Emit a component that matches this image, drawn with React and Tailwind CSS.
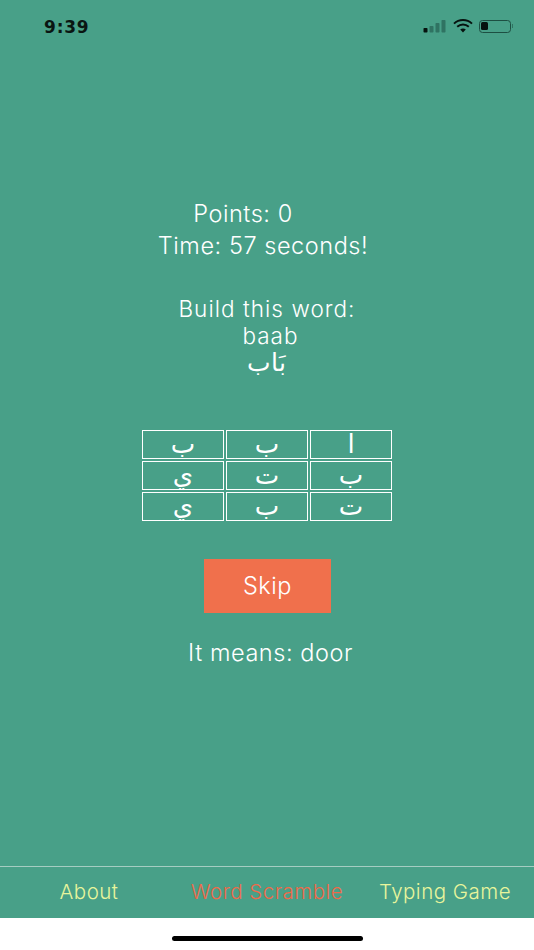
const F = "font-['Inter','Liberation_Sans','Noto_Sans',sans-serif]";
const cells = ["ب", "ب", "ا", "ي", "ت", "ب", "ي", "ب", "ت"];

function Signal() {
  return (
    <svg width="24" height="14" viewBox="0 0 24 14" className="block">
      <rect x="0.5" y="9" width="4" height="4.5" rx="0.8" fill="#06120e" />
      <rect x="6.5" y="7" width="4" height="6.5" rx="0.8" fill="#2f7362" />
      <rect x="12.5" y="4" width="4" height="9.5" rx="0.8" fill="#2f7362" />
      <rect x="18.5" y="1" width="4" height="12.5" rx="0.8" fill="#2f7362" />
    </svg>
  );
}

function Wifi() {
  return (
    <svg width="20" height="14" viewBox="0 0 20 14" className="block">
      <path d="M1 4.6C6 -0.2 14 -0.2 19 4.6" fill="none" stroke="#06120e" strokeWidth="2" />
      <path d="M4.2 7.8C7.5 4.8 12.5 4.8 15.8 7.8" fill="none" stroke="#06120e" strokeWidth="2" />
      <path d="M7.2 10.6L10 13.6L12.8 10.6C11.2 9.2 8.8 9.2 7.2 10.6Z" fill="#06120e" />
    </svg>
  );
}

function Battery() {
  return (
    <div className="flex items-center">
      <div className="w-[32px] h-[13px] rounded-[3.5px] border border-[#1d4f42] p-[1.5px] flex">
        <div className="w-[7px] rounded-[1.5px] bg-[#06120e]" />
      </div>
      <div className="w-[1.5px] h-[4px] bg-[#2f7362] ml-[1px]" />
    </div>
  );
}

export default function App() {
  return (
    <div className={`${F} w-[534px] h-[950px] bg-white flex flex-col overflow-hidden`}>
      <div className="h-[866px] bg-[#48a088] flex flex-col">
        <div className="h-[52px] flex items-start justify-between pt-[17px] pl-[44px] pr-[22px]">
          <span className="font-['DejaVu_Sans',sans-serif] font-bold text-[17px] leading-[20px] tracking-[0.8px] text-[#0a1512]">9:39</span>
          <div className="flex items-center gap-[6px] pt-[2px] mr-[-1px]">
            <Signal />
            <Wifi />
            <Battery />
          </div>
        </div>

        <div className="flex flex-col items-center text-white font-light text-[23.5px] tracking-[0.55px] leading-[32px] pt-[146px]">
          <div className="mr-[48px]">Points: 0</div>
          <div className="mr-[8px]">Time: 57 seconds!</div>
          <div className="flex flex-col items-center mt-[33px] text-[22.5px] tracking-[1.05px] leading-[27px]">
            <div>Build this word:</div>
            <div className="ml-[7px]">baab</div>
            <div className="font-['DejaVu_Sans',sans-serif] text-[25px] tracking-normal" dir="rtl">بَاب</div>
          </div>
        </div>

        <div className="grid grid-cols-[82px_82px_82px] grid-rows-[29px_29px_29px] gap-[2px] justify-center mt-[54px] text-white">
          {cells.map((c, i) => (
            <div key={i} className="border border-white flex items-center justify-center text-[26px] leading-[29px] font-['DejaVu_Sans',sans-serif] overflow-hidden">
              {c}
            </div>
          ))}
        </div>

        <button className="self-center mt-[38px] w-[127px] h-[54px] bg-[#f0704c] text-white font-light text-[23.5px] tracking-[0.55px] flex items-center justify-center mr-[-1px]">
          Skip
        </button>

        <div className="self-center mt-[24px] ml-[7px] text-white font-light text-[23.5px] tracking-[0.55px] leading-[32px]">It means: door</div>
      </div>

      <nav className="h-[52px] bg-[#48a088] border-t border-[#a6cdc2] grid grid-cols-3 items-center text-[20.5px] tracking-[0.5px] font-light leading-[24px] text-center pb-[2px]">
        <span className="text-[#e8f59c]">About</span>
        <span className="text-[#ee6a4a]">Word Scramble</span>
        <span className="text-[#e8f59c]">Typing Game</span>
      </nav>

      <div className="flex-1 flex justify-center pt-[18px]">
        <div className="w-[191px] h-[5px] rounded-full bg-black" />
      </div>
    </div>
  );
}
